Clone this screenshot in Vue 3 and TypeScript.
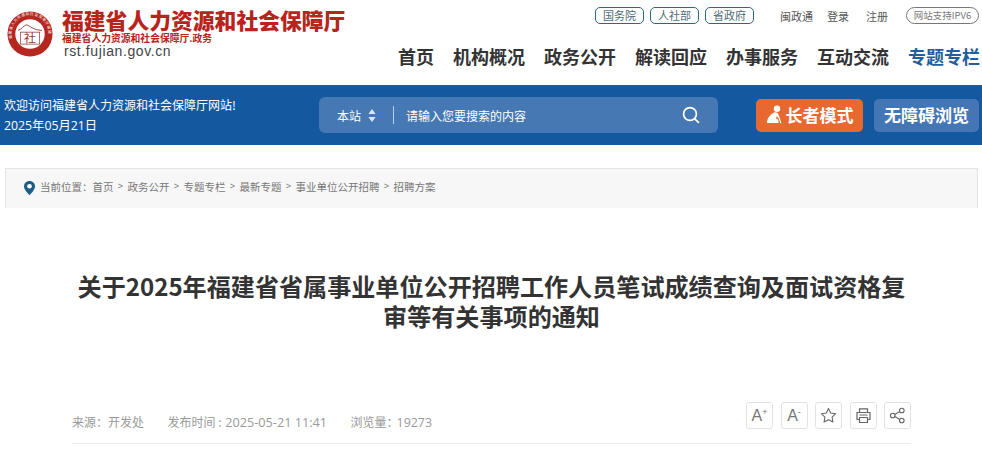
<template>
  <div class="page">
    <header class="top">
      <div class="logo">
        <svg class="seal" viewBox="0 0 50 50" width="46" height="46">
          <circle cx="25" cy="25" r="24.500" fill="#b5271f" />
          <circle cx="25" cy="25" r="16" fill="#fff" />
          <defs>
            <path id="sealArc" d="M5.500 30A20.200 20.200 0 1 1 44.500 30" />
          </defs>
          <text class="seal-ring"><textPath href="#sealArc">福建省人力资源和社会保障厅福建</textPath></text>
          <path d="M12 21c4-1 6-5 9-6 4 1 8 6 17 6" fill="none" stroke="#8c3a33" stroke-width="1" />
          <rect x="14.500" y="23" width="21" height="13" fill="none" stroke="#8c3a33" stroke-width="0.800" />
          <text x="25" y="35" text-anchor="middle" class="seal-mark">社</text>
        </svg>
        <div class="logo-text">
          <div class="logo-title">福建省人力资源和社会保障厅</div>
          <div class="logo-sub">福建省人力资源和社会保障厅.政务</div>
          <div class="logo-url">rst.fujian.gov.cn</div>
        </div>
      </div>
      <div class="top-right">
        <div class="links">
          <div class="pills">
            <a v-for="p in pills" :key="p" class="pill">{{ p }}</a>
          </div>
          <div class="plain">
            <a v-for="l in plainLinks" :key="l">{{ l }}</a>
          </div>
          <span class="ipv6">网站支持IPV6</span>
        </div>
        <nav class="nav">
          <a v-for="(n, i) in navItems" :key="n" :class="{ active: i === navItems.length - 1 }">{{ n }}</a>
        </nav>
      </div>
    </header>

    <section class="band">
      <div class="welcome">
        <div>欢迎访问福建省人力资源和社会保障厅网站!</div>
        <div class="today">2025年05月21日</div>
      </div>
      <div class="search">
        <span class="scope">本站</span>
        <svg class="updown" width="8" height="13" viewBox="0 0 8 13">
          <path d="M4 0l3.600 5H.4zM4 13L.4 8h7.200z" fill="#dbe6f2" />
        </svg>
        <i class="divider"></i>
        <span class="placeholder">请输入您要搜索的内容</span>
        <svg class="glass" width="18" height="18" viewBox="0 0 18 18" fill="none" stroke="#fff" stroke-width="1.700">
          <circle cx="8" cy="8" r="6.400" />
          <path d="M12.800 12.800l3.600 3.600" stroke-linecap="round" />
        </svg>
      </div>
      <button class="mode orange">
        <svg width="17" height="19" viewBox="0 0 17 19">
          <circle cx="11" cy="3.800" r="3.200" fill="#fff" />
          <path d="M8.500 7.200c1.800-.3 3.500.6 4 2.300l.8 2.700-1.600.6-.8-1.800-.9 2.500 2.400 1.200V18H1c-.3-3.800 3-8.800 7.500-10.800z" fill="#fff" />
          <path d="M12.600 11.500l2.300 6.800" fill="none" stroke="#fff" stroke-width="1.100" />
        </svg>
        <span>长者模式</span>
      </button>
      <button class="mode blue"><span>无障碍浏览</span></button>
    </section>

    <section class="crumb">
      <svg width="11" height="14" viewBox="0 0 11 14">
        <path d="M5.500 0C2.400 0 0 2.400 0 5.400 0 9 5.500 14 5.500 14S11 9 11 5.400C11 2.400 8.600 0 5.500 0z" fill="#1d5d85" />
        <circle cx="5.500" cy="5.300" r="2.300" fill="#fff" />
      </svg>
      <span class="crumb-label">当前位置：</span>
      <template v-for="(c, i) in crumbs" :key="c">
        <span v-if="i > 0" class="sep">&gt;</span>
        <span>{{ c }}</span>
      </template>
    </section>

    <main class="article">
      <h1>关于2025年福建省省属事业单位公开招聘工作人员笔试成绩查询及面试资格复审等有关事项的通知</h1>
      <div class="meta">
        <div class="meta-text">
          <span>来源：开发处</span>
          <span>发布时间 : <b>2025-05-21 11:41</b></span>
          <span>浏览量：<b class="views">19273</b></span>
        </div>
        <div class="tools">
          <button class="tool"><span class="font-a">A<sup>+</sup></span></button>
          <button class="tool"><span class="font-a">A<sup>-</sup></span></button>
          <button class="tool">
            <svg width="17" height="17" viewBox="0 0 17 17" fill="none" stroke="#666" stroke-width="1.100" stroke-linejoin="round">
              <path d="M8.500 1.500l2.200 4.500 4.900.7-3.500 3.400.8 4.900-4.400-2.300-4.400 2.300.8-4.900L1.400 6.700l4.900-.7z" />
            </svg>
          </button>
          <button class="tool">
            <svg width="17" height="17" viewBox="0 0 17 17" fill="none" stroke="#666" stroke-width="1.200">
              <path d="M4.500 5V1.800h8V5M4.500 12.500H2V5.500h13v7h-2.500" />
              <path d="M4.500 10.500h8v5h-8zM4.500 8h8" />
            </svg>
          </button>
          <button class="tool">
            <svg width="17" height="17" viewBox="0 0 17 17" fill="none" stroke="#666" stroke-width="1.100">
              <circle cx="3.700" cy="8.500" r="2.300" />
              <circle cx="12.800" cy="3.500" r="2.300" />
              <circle cx="12.800" cy="13.500" r="2.300" />
              <path d="M5.800 7.400l5-2.800M5.800 9.600l5 2.800" />
            </svg>
          </button>
        </div>
      </div>
    </main>
  </div>
</template>

<script setup lang="ts">
const pills: string[] = ['国务院', '人社部', '省政府']
const plainLinks: string[] = ['闽政通', '登录', '注册']
const navItems: string[] = ['首页', '机构概况', '政务公开', '解读回应', '办事服务', '互动交流', '专题专栏']
const crumbs: string[] = ['首页', '政务公开', '专题专栏', '最新专题', '事业单位公开招聘', '招聘方案']
</script>

<style>
html,
body {
  margin: 0;
  background: #fff;
  overflow: hidden;
}
</style>

<style scoped>
.page {
  width: 982px;
  height: 472px;
  overflow: hidden;
  font-family: "Noto Sans CJK SC", "Liberation Sans", sans-serif;
  color: #333;
}

.top {
  height: 85px;
  box-sizing: border-box;
  display: flex;
  justify-content: space-between;
  padding: 7px 3px 0 7px;
}

.logo {
  display: flex;
  gap: 9px;
}

.seal {
  margin-top: 4px;
}

.seal-ring {
  font-size: 4px;
  fill: #fff;
  letter-spacing: 0.6px;
}

.seal-mark {
  font-size: 13px;
  fill: #8c3a33;
}

.logo-title {
  font-size: 21.800px;
  line-height: 25px;
  font-weight: 900;
  color: #b8231c;
  white-space: nowrap;
}

.logo-sub {
  font-size: 9.800px;
  line-height: 12px;
  font-weight: 700;
  color: #b8231c;
}

.logo-url {
  margin: 0 0 0 2px;
  font-family: "Liberation Sans", sans-serif;
  font-size: 14px;
  line-height: 15px;
  letter-spacing: 0.6px;
  color: #444;
}

.top-right {
  display: flex;
  flex-direction: column;
  align-items: flex-end;
}

.links {
  display: flex;
  align-items: center;
  height: 17px;
  font-size: 11px;
  color: #555;
}

.pills {
  display: flex;
  gap: 6px;
}

.pill {
  width: 49px;
  height: 17px;
  line-height: 15px;
  box-sizing: border-box;
  text-align: center;
  border: 1px solid #2b6b78;
  border-radius: 5px;
  color: #4d6b73;
}

.plain {
  display: flex;
  gap: 14px;
  margin-left: 26px;
}

.plain a:last-child {
  margin-left: 3px;
}

.ipv6 {
  margin-left: 18px;
  width: 73px;
  height: 17px;
  line-height: 15px;
  box-sizing: border-box;
  border: 1px solid #777;
  border-radius: 9px;
  text-align: center;
  font-size: 9.500px;
  color: #777;
}

.nav {
  display: flex;
  gap: 19px;
  margin-top: 20px;
  margin-right: -1px;
  font-size: 18px;
  line-height: 24px;
  font-weight: 700;
  color: #333;
}

.nav .active {
  color: #1f5f9e;
}

.band {
  height: 60px;
  box-sizing: border-box;
  display: flex;
  align-items: center;
  padding: 0 3px 1px 4px;
  background: #14599f;
  border-top: 1px solid #2d5a85;
  color: #fff;
}

.welcome {
  width: 315px;
  padding-bottom: 1px;
  font-size: 12px;
  line-height: 21px;
}

.today {
  font-family: "Open Sans", "Noto Sans CJK SC", sans-serif;
  font-size: 12.300px;
}

.search {
  width: 399px;
  height: 36px;
  box-sizing: border-box;
  display: flex;
  align-items: center;
  padding: 0 18px;
  border-radius: 6px;
  background: #4678b4;
  font-size: 12px;
}

.updown {
  margin-left: 7px;
}

.divider {
  width: 1px;
  height: 18px;
  margin: 0 12px 0 17px;
  background: #b9cfe6;
}

.placeholder {
  flex: 1;
}

.mode {
  height: 33px;
  display: flex;
  align-items: center;
  justify-content: center;
  gap: 3px;
  padding: 0 0 2px;
  border: 0;
  border-radius: 5px;
  color: #fff;
  font-family: inherit;
  font-size: 17px;
  font-weight: 700;
}

.orange {
  width: 107px;
  margin-left: 38px;
  background: #e8692f;
}

.blue {
  width: 105px;
  margin-left: 11px;
  background: #4476b6;
}

.crumb {
  height: 40px;
  box-sizing: border-box;
  margin: 23px 4px 0 5px;
  padding: 0 0 5px 18px;
  display: flex;
  align-items: center;
  background: #f7f7f7;
  border: 1px solid #e4e4e4;
  border-bottom: 0;
  font-size: 10.500px;
  color: #777;
}

.crumb svg {
  margin-top: 3px;
}

.crumb-label {
  margin-left: 5px;
}

.sep {
  width: 14px;
  text-align: center;
  font-family: "Liberation Sans", sans-serif;
  font-size: 9px;
}

.article {
  padding: 63px 71px 0 72px;
}

h1 {
  margin: 0;
  font-size: 24.100px;
  line-height: 30px;
  font-weight: 700;
  color: #333;
  text-align: center;
}

.meta {
  display: flex;
  justify-content: space-between;
  align-items: flex-end;
  margin-top: 71px;
  padding-bottom: 14px;
  border-bottom: 1px solid #ececec;
}

.meta-text {
  display: flex;
  gap: 23.500px;
  font-size: 12px;
  line-height: 12px;
  color: #999;
}

.meta-text b {
  font-family: "Open Sans", sans-serif;
  font-size: 12.700px;
  font-weight: 400;
  margin-left: 1px;
}

.meta-text .views {
  margin-left: -2px;
  font-size: 12.400px;
}

.tools {
  display: flex;
  gap: 7.500px;
}

.tool {
  width: 27px;
  height: 27px;
  padding: 0;
  display: flex;
  align-items: center;
  justify-content: center;
  background: #fff;
  border: 1px solid #e2e2e2;
  border-radius: 3px;
}

.font-a {
  font-family: "Liberation Sans", sans-serif;
  font-size: 16px;
  color: #777;
}

.font-a sup {
  font-size: 9px;
  line-height: 0;
}
</style>
